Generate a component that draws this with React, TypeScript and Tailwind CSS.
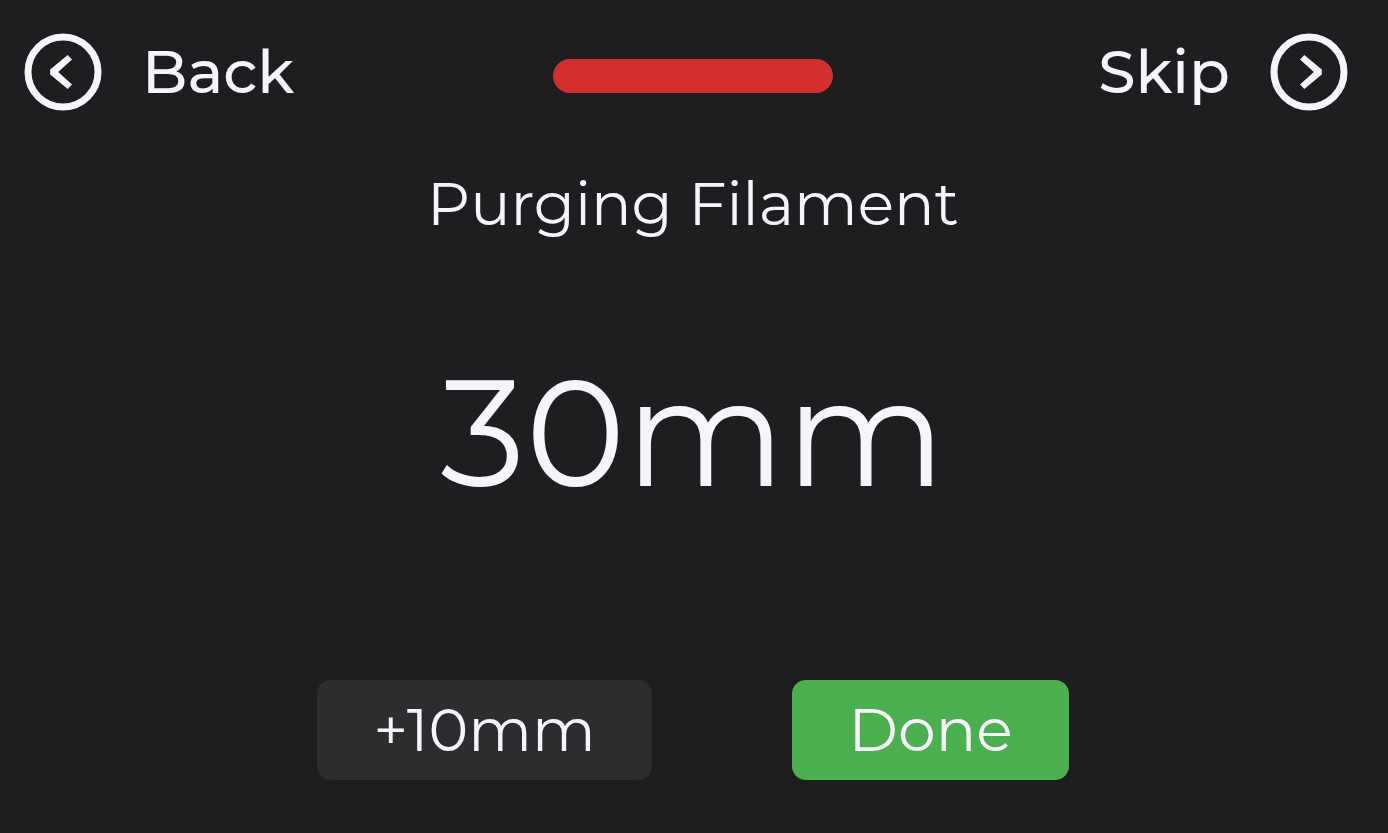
const Chevron = ({ direction }: { direction: "left" | "right" }) => (
  <svg aria-hidden="true" viewBox="0 0 78 78" className="size-[78px] shrink-0">
    <circle cx="39" cy="39" r="35" fill="none" stroke="currentColor" strokeWidth="7" />
    <path
      d={
        direction === "left"
          ? "M43.7 22 48 26.6 34.2 39 48 51.4 43.7 56 26.2 41.6V36.4Z"
          : "M34.3 22 30 26.6 43.8 39 30 51.4 34.3 56 51.8 41.6V36.4Z"
      }
      fill="currentColor"
    />
  </svg>
);

export default function App() {
  return (
    <div className="flex min-h-screen flex-col bg-[#1e1e20] pr-0.5 font-['Montserrat','Inter',sans-serif] text-[#f5f6fa]">
      <header className="grid grid-cols-[1fr_auto_1fr] items-center px-6 pt-8">
        <button type="button" className="flex h-20 items-center gap-10 justify-self-start text-[60px] leading-none font-medium">
          <Chevron direction="left" />
          Back
        </button>
        <div role="status" aria-label="Purge status" className="mt-2 h-[34px] w-[280px] rounded-full bg-[#d32f2f]" />
        <button type="button" className="mr-3.5 flex h-20 items-center gap-10 justify-self-end text-[60px] leading-none font-medium">
          Skip
          <Chevron direction="right" />
        </button>
      </header>
      <main className="flex flex-1 flex-col items-center pt-14 pb-[53px]">
        <h1 className="text-[60px] leading-[72px]">Purging Filament</h1>
        <p className="flex flex-1 items-center pb-14 text-[151px] leading-none">30mm</p>
        <div className="flex gap-[140px] text-[60px] leading-none">
          <button type="button" className="h-[100px] w-[335px] rounded-[14px] bg-[#2d2d2f]">+10mm</button>
          <button type="button" className="h-[100px] w-[277px] rounded-[14px] bg-[#4caf50]">Done</button>
        </div>
      </main>
    </div>
  );
}
